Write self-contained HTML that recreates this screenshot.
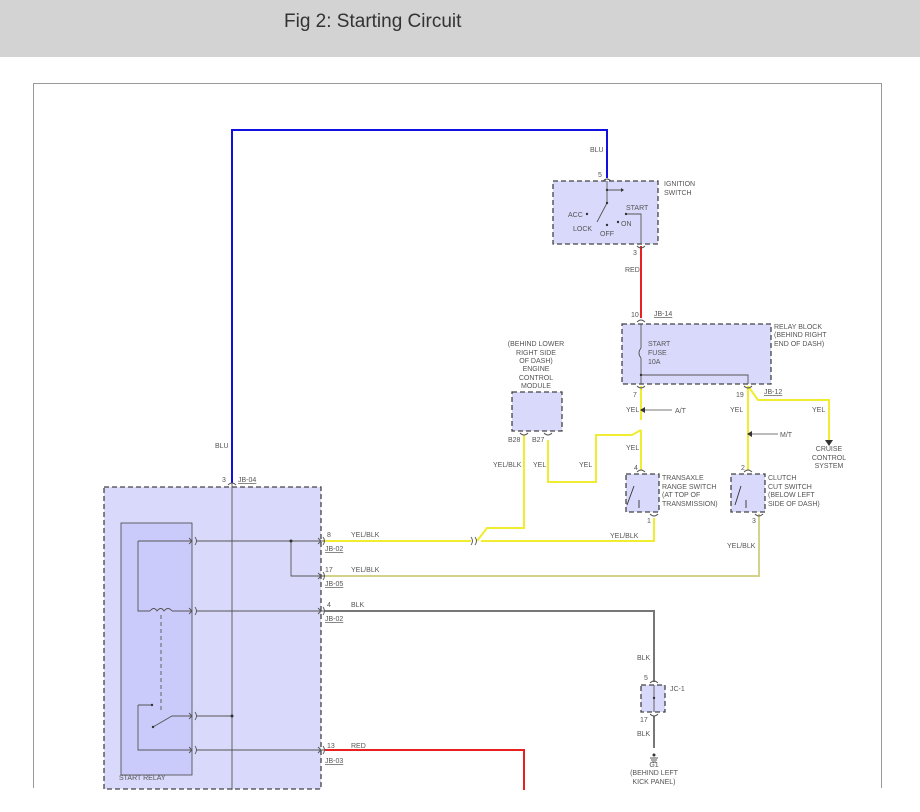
<!DOCTYPE html>
<html><head><meta charset="utf-8"><style>
body{margin:0;width:920px;height:812px;background:#fff;overflow:hidden;font-family:"Liberation Sans",sans-serif}
.hdr{position:absolute;left:0;top:0;width:920px;height:57px;background:#d3d3d3}
.hdr span{position:absolute;left:284px;top:11px;font-size:19px;color:#333}
svg{position:absolute;left:0;top:0}
text{font-family:"Liberation Sans",sans-serif;font-size:7px;fill:#555}
.u{text-decoration:underline}
</style></head><body>
<div class="hdr"><span>Fig 2: Starting Circuit</span></div>
<svg width="920" height="812" viewBox="0 0 920 812">
<path d="M33.5 788V83.5H881.5V788" fill="none" stroke="#999" stroke-width="1"/>
<g stroke="#444" stroke-width="1.3" stroke-dasharray="5,3" fill="#d9d9fb">
<rect x="104" y="487" width="217" height="302"/>
<rect x="553" y="181" width="105" height="63"/>
<rect x="622" y="324" width="149" height="60"/>
<rect x="512" y="392" width="50" height="39"/>
<rect x="626" y="474" width="33" height="38"/>
<rect x="731" y="474" width="34" height="38"/>
<rect x="641" y="685" width="24" height="27"/>
</g>
<rect x="121" y="523" width="71" height="252" fill="#cbcbfb" stroke="#444" stroke-width="0.8"/>
<g fill="none" stroke-width="2">
<path d="M232 483V130H607V178" stroke="#1010e0"/>
<path d="M641 246V318" stroke="#e82020"/>
<path d="M641 386V420M641 430V470M641 430L632 435H596V482H548V440" stroke="#f0ec30"/>
<path d="M748 386V470M748 386L758 400H829V440" stroke="#f0ec30"/>
<path d="M524 435V528H487L477 541M325 541H471M481 541H654V518" stroke="#f0ec30"/>
<path d="M759 514V576H325" stroke="#d2d28a"/>
<path d="M325 611H654V682M654 716V748" stroke="#777"/>
<path d="M325 750H524V790" stroke="#e82020"/>
</g>
<g fill="none" stroke="#555" stroke-width="0.9">
<path d="M232 483V790"/>
<path d="M607 181V203L597 222M607 190H621M626 214H641V244"/>
<path d="M641 324V348M641 358V375M641 375H748V384M641 375V384"/>
<path d="M641 348q-4 5 0 10"/>
<path d="M138 541H192M138 541V611H150M172 611H192M150 611q4 -5 7 0q4 -5 7 0q4 -5 8 0"/>
<path d="M196 541H325M291 541V576H325M196 611H325M196 716H232M196 750H325"/>
<path d="M161 615V712" stroke-dasharray="4,3"/>
<path d="M153 727L172 716H192M138 705H152M138 705V750H192"/>
<path d="M645 410H672M752 434H778" stroke="#777"/>
<path d="M634 486L627 505M639 500V508M741 486L735 505M746 500V508" stroke="#333"/>
<path d="M654 685V712"/>
<path d="M650 758h8M651 760h6M652 762h4"/>
<!-- connector marks -->
<path d="M189 538l3 3l-3 3M195 537q3 4 0 8M189 608l3 3l-3 3M195 607q3 4 0 8M189 713l3 3l-3 3M195 712q3 4 0 8M189 747l3 3l-3 3M195 746q3 4 0 8"/>
<path d="M318 538l3 3l-3 3M323 537q3 4 0 8M318 573l3 3l-3 3M323 572q3 4 0 8M318 608l3 3l-3 3M323 607q3 4 0 8M318 747l3 3l-3 3M323 746q3 4 0 8"/>
<path d="M471 537q3 4 0 8M475 537q3 4 0 8"/>
<path d="M603 181q4 -4 8 0M637 246q4 4 8 0M637 322q4 -4 8 0M637 386q4 4 8 0M744 386q4 4 8 0M637 472q4 -4 8 0M650 514q4 4 8 0M744 472q4 -4 8 0M755 514q4 4 8 0M650 683q4 -4 8 0M650 714q4 4 8 0M228 485q4 -4 8 0M520 433q4 4 8 0M544 433q4 4 8 0"/>
</g>
<g fill="#333">
<circle cx="291" cy="541" r="1.5"/><circle cx="232" cy="716" r="1.5"/>
<circle cx="587" cy="214" r="1.2"/><circle cx="607" cy="225" r="1.2"/><circle cx="618" cy="222" r="1.2"/><circle cx="626" cy="214" r="1.2"/>
<circle cx="153" cy="727" r="1.2"/><circle cx="152" cy="705" r="1.2"/><circle cx="654" cy="698" r="1.2"/><circle cx="654" cy="755" r="1.5"/>
<circle cx="607" cy="190" r="1.2"/><circle cx="607" cy="203" r="1.2"/><circle cx="641" cy="375" r="1.2"/>
<path d="M645 407V413L640 410Z M752 431V437L747 434Z M825 440H833L829 446Z M621 188V192L624 190Z"/>
</g>
<text x="590" y="152">BLU</text><text x="215" y="448">BLU</text>
<text x="598" y="177">5</text>
<text x="664" y="186">IGNITION</text><text x="664" y="195">SWITCH</text>
<text x="568" y="217">ACC</text><text x="573" y="231">LOCK</text><text x="600" y="236">OFF</text><text x="621" y="226">ON</text><text x="626" y="210">START</text>
<text x="633" y="255">3</text><text x="625" y="272">RED</text>
<text x="631" y="317">10</text><text x="654" y="316" class="u">JB-14</text>
<text x="774" y="329">RELAY BLOCK</text><text x="774" y="337">(BEHIND RIGHT</text><text x="774" y="346">END OF DASH)</text>
<text x="648" y="346">START</text><text x="648" y="355">FUSE</text><text x="648" y="364">10A</text>
<text x="633" y="397">7</text><text x="736" y="397">19</text><text x="764" y="394" class="u">JB-12</text>
<text x="626" y="412">YEL</text><text x="675" y="413">A/T</text><text x="626" y="450">YEL</text>
<text x="730" y="412">YEL</text><text x="780" y="437">M/T</text><text x="812" y="412">YEL</text>
<g text-anchor="middle"><text x="829" y="451">CRUISE</text><text x="829" y="460">CONTROL</text><text x="829" y="468">SYSTEM</text>
<text x="536" y="346">(BEHIND LOWER</text><text x="536" y="355">RIGHT SIDE</text><text x="536" y="363">OF DASH)</text><text x="536" y="371">ENGINE</text><text x="536" y="380">CONTROL</text><text x="536" y="388">MODULE</text>
<text x="654" y="767">G1</text><text x="654" y="775">(BEHIND LEFT</text><text x="654" y="784">KICK PANEL)</text></g>
<text x="508" y="442">B28</text><text x="532" y="442">B27</text>
<text x="493" y="467">YEL/BLK</text><text x="533" y="467">YEL</text><text x="579" y="467">YEL</text>
<text x="634" y="470">4</text><text x="647" y="523">1</text><text x="741" y="470">2</text><text x="752" y="523">3</text>
<text x="662" y="480">TRANSAXLE</text><text x="662" y="489">RANGE SWITCH</text><text x="662" y="497">(AT TOP OF</text><text x="662" y="506">TRANSMISSION)</text>
<text x="768" y="480">CLUTCH</text><text x="768" y="489">CUT SWITCH</text><text x="768" y="497">(BELOW LEFT</text><text x="768" y="506">SIDE OF DASH)</text>
<text x="610" y="538">YEL/BLK</text><text x="727" y="548">YEL/BLK</text>
<text x="222" y="482">3</text><text x="238" y="482" class="u">JB-04</text>
<text x="327" y="537">8</text><text x="351" y="537">YEL/BLK</text><text x="325" y="551" class="u">JB-02</text>
<text x="325" y="572">17</text><text x="351" y="572">YEL/BLK</text><text x="325" y="586" class="u">JB-05</text>
<text x="327" y="607">4</text><text x="351" y="607">BLK</text><text x="325" y="621" class="u">JB-02</text>
<text x="327" y="748">13</text><text x="351" y="748">RED</text><text x="325" y="763" class="u">JB-03</text>
<text x="119" y="780">START RELAY</text>
<text x="637" y="660">BLK</text><text x="644" y="680">5</text><text x="670" y="691">JC-1</text><text x="640" y="722">17</text><text x="637" y="736">BLK</text>
</svg>
</body></html>
